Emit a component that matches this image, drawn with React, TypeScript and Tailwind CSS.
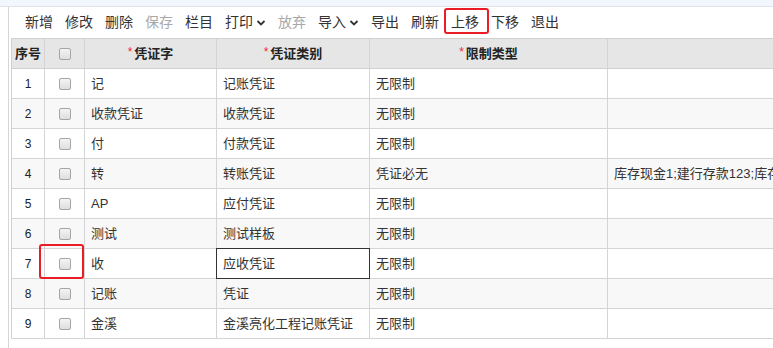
import { ReactNode } from "react";

const rows = [
  { no: 1, word: "记", type: "记账凭证", limit: "无限制", extra: "" },
  { no: 2, word: "收款凭证", type: "收款凭证", limit: "无限制", extra: "" },
  { no: 3, word: "付", type: "付款凭证", limit: "无限制", extra: "" },
  { no: 4, word: "转", type: "转账凭证", limit: "凭证必无", extra: "库存现金1;建行存款123;库存现金2" },
  { no: 5, word: "AP", type: "应付凭证", limit: "无限制", extra: "" },
  { no: 6, word: "测试", type: "测试样板", limit: "无限制", extra: "" },
  { no: 7, word: "收", type: "应收凭证", limit: "无限制", extra: "" },
  { no: 8, word: "记账", type: "凭证", limit: "无限制", extra: "" },
  { no: 9, word: "金溪", type: "金溪亮化工程记账凭证", limit: "无限制", extra: "" },
];

const Chevron = () => (
  <svg width="10" height="6" viewBox="0 0 10 6" className="ml-[3px]">
    <polyline points="1.5,1 5,4.5 8.5,1" fill="none" stroke="#333" strokeWidth="1.8" />
  </svg>
);

const ToolButton = ({ label, disabled, menu }: { label: string; disabled?: boolean; menu?: boolean }) => (
  <div className={`flex items-center px-[6px] h-full text-[14px] ${disabled ? "text-[#a8a8a8]" : "text-[#333]"}`}>
    <span>{label}</span>
    {menu && <Chevron />}
  </div>
);

const Checkbox = () => (
  <div className="w-[12px] h-[12px] rounded-[2px] border border-[#a6a6a6] bg-gradient-to-b from-[#f4f4f4] to-[#dedede]" />
);

const Cell = ({ w, children, center, className = "" }: { w: string; children?: ReactNode; center?: boolean; className?: string }) => (
  <div className={`${w} shrink-0 h-full border-r border-[#d4d4d4] flex items-center whitespace-nowrap overflow-hidden ${center ? "justify-center" : "px-[6px]"} ${className}`}>
    {children}
  </div>
);

const Star = () => <span className="text-[#f0263a] text-[12px] font-normal mr-[2px] relative -top-[2px]">*</span>;

export default function App() {
  return (
    <div className="relative w-full h-screen overflow-hidden bg-white font-['Liberation_Sans','Noto_Sans_CJK_SC',sans-serif]">
      <div className="h-[7px] bg-[#f2f6fd] border-b border-[#dfe2e7]" />
      <div className="flex h-[341px]">
        <div className="w-[8px] shrink-0" />
        <div className="flex-1 border-l border-[#d6d6d6] min-w-0">
          {/* toolbar */}
          <div className="h-[31px] flex items-center pl-[10px]">
            <ToolButton label="新增" />
            <ToolButton label="修改" />
            <ToolButton label="删除" />
            <ToolButton label="保存" disabled />
            <ToolButton label="栏目" />
            <ToolButton label="打印" menu />
            <ToolButton label="放弃" disabled />
            <ToolButton label="导入" menu />
            <ToolButton label="导出" />
            <ToolButton label="刷新" />
            <ToolButton label="上移" />
            <ToolButton label="下移" />
            <ToolButton label="退出" />
          </div>

          {/* grid */}
          <div className="ml-[2px] w-[1000px] border-l border-t border-[#d0d0d0] text-[13px] text-[#333]">
            <div className="flex h-[30px] bg-[#e6e6e6] border-b border-[#d0d0d0] font-bold text-[13px] text-[#222]">
              <Cell w="w-[33px]" center>序号</Cell>
              <Cell w="w-[40px]" center><Checkbox /></Cell>
              <Cell w="w-[132px]" center><Star />凭证字</Cell>
              <Cell w="w-[153px]" center><Star />凭证类别</Cell>
              <Cell w="w-[238px]" center><Star />限制类型</Cell>
              <Cell w="flex-1" />
            </div>
            {rows.map((r) => (
              <div key={r.no} className={`flex h-[30px] border-b border-[#d4d4d4] ${r.no % 2 === 0 ? "bg-[#f8f8f8]" : "bg-white"}`}>
                <Cell w="w-[33px]" center className="text-[12px] text-[#222]">{r.no}</Cell>
                <Cell w="w-[40px]" center><Checkbox /></Cell>
                <Cell w="w-[132px]">{r.word}</Cell>
                <Cell w="w-[153px]" className={r.no === 7 ? "relative overflow-visible" : ""}>
                  {r.type}
                  {r.no === 7 && <div className="absolute -inset-px border border-[#333]" />}
                </Cell>
                <Cell w="w-[238px]">{r.limit}</Cell>
                <Cell w="flex-1">{r.extra}</Cell>
              </div>
            ))}
          </div>
        </div>
      </div>

      {/* annotation marks */}
      <div className="absolute left-[444px] top-[8px] w-[45px] h-[26px] border-2 border-[#ec1c24] rounded-[3px]" />
      <div className="absolute left-[39px] top-[244px] w-[45px] h-[35px] border-2 border-[#ec1c24] rounded-[3px]" />
    </div>
  );
}
